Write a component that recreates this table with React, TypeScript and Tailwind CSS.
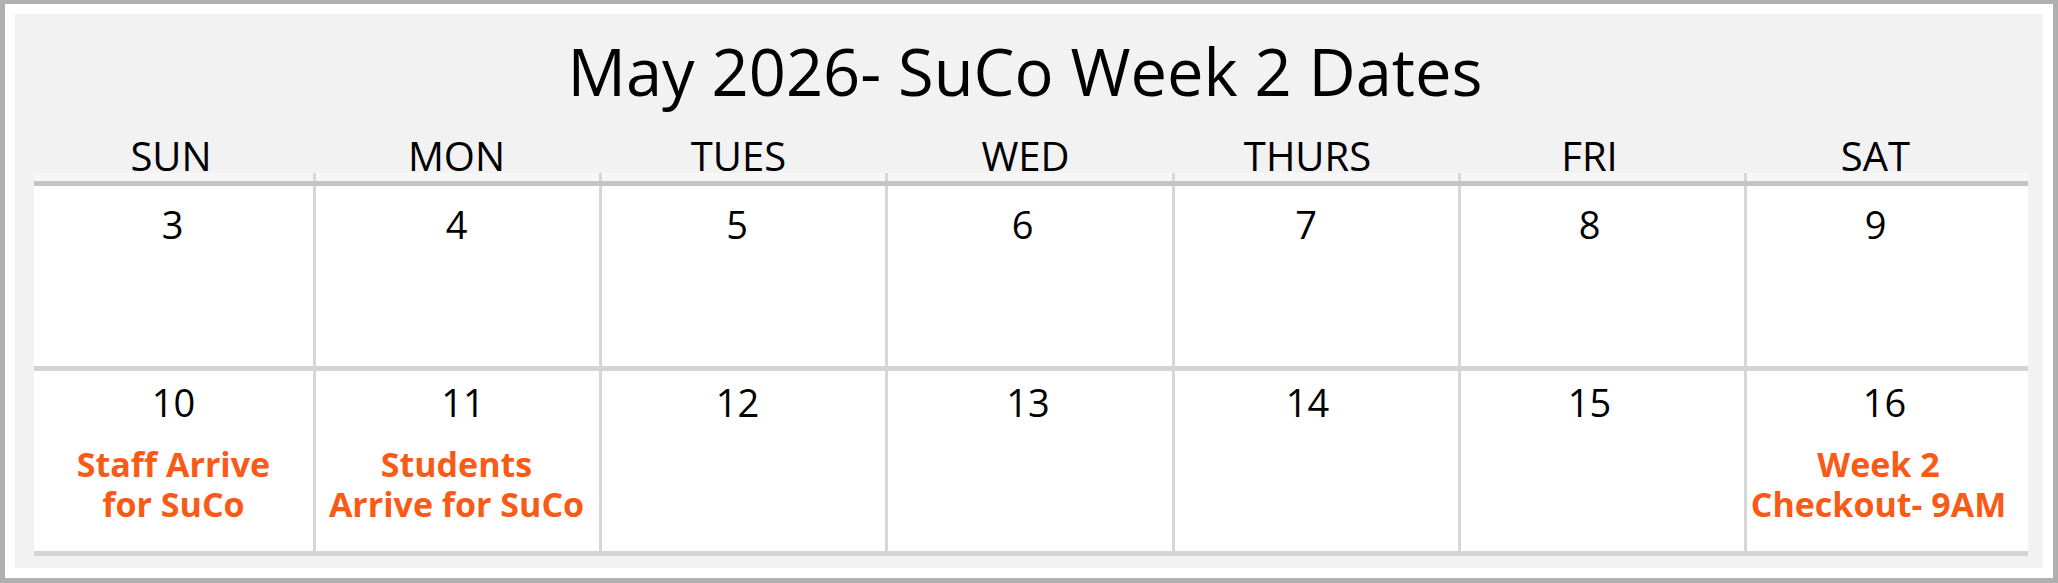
import React from 'react';

// header labels, each nudged a little so they sit where the original puts them
const days = [
  { label: 'SUN', cls: 'pr-[5px]' },
  { label: 'MON', cls: 'pr-[2px]' },
  { label: 'TUES', cls: 'pr-[10px]' },
  { label: 'WED', cls: 'pr-[9px]' },
  { label: 'THURS', cls: 'pr-[18px]' },
  { label: 'FRI', cls: 'pr-[26px]' },
  { label: 'SAT', cls: 'pr-[24px]' },
];

type Cell = { date: string; cls: string; note?: string[]; noteCls?: string };

const weeks: Cell[][] = [
  [
    { date: '3', cls: 'pr-[2px]' },
    { date: '4', cls: 'pr-[2px]' },
    { date: '5', cls: 'pr-[13px]' },
    { date: '6', cls: 'pr-[15px]' },
    { date: '7', cls: 'pr-[21px]' },
    { date: '8', cls: 'pr-[26px]' },
    { date: '9', cls: 'pr-[24px]' },
  ],
  [
    { date: '10', cls: '', note: ['Staff Arrive', 'for SuCo'], noteCls: '' },
    { date: '11', cls: 'pl-[11px]', note: ['Students', 'Arrive for SuCo'], noteCls: 'pr-[2px]' },
    { date: '12', cls: 'pr-[12px]' },
    { date: '13', cls: 'pr-[4px]' },
    { date: '14', cls: 'pr-[18px]' },
    { date: '15', cls: 'pr-[26px]' },
    { date: '16', cls: 'pr-[6px]', note: ['Week 2', 'Checkout- 9AM'], noteCls: 'pr-[18px]' },
  ],
];

const cols = 'grid-cols-[282px_286px_286px_287px_286px_286px_281px]';

export default function App() {
  return (
    <div className="h-[583px] w-[2058px] border-[5px] border-t-[4px] border-[#b0b0b0] bg-white p-[10px] font-['Open_Sans',sans-serif] text-black">
      <div className="flex h-full flex-col bg-[#f2f2f2] pl-[19px] pr-[15px] pt-[24px]">
        <h1 className="pr-[12px] text-center text-[65px] leading-[66px] font-normal">May 2026- SuCo Week 2 Dates</h1>

        <div className={`mt-[35px] grid h-[34px] ${cols} divide-x-[3px] divide-transparent text-center text-[40px] leading-[34px]`}>
          {days.map((d) => (
            <div className={d.cls} key={d.label}>
              {d.label}
            </div>
          ))}
        </div>

        <div className="flex flex-col">
          <div className={`grid h-[8px] ${cols} divide-x-[3px] divide-[#d6d6d6] bg-[#f7f7f7]`}>
            {days.map((d) => (
              <div key={d.label} />
            ))}
          </div>
          <div className="h-[5px] bg-[#c4c4c4]" />
          {weeks.map((week, i) => (
            <div key={i}>
              <div className={`grid h-[180px] ${cols} divide-x-[3px] divide-[#d6d6d6] bg-white`}>
                {week.map((c) => (
                  <div className={i === 0 ? 'pt-[16px] text-center' : 'pt-[9px] text-center'} key={c.date}>
                    <div className={`text-[38px] leading-[44px] ${c.cls}`}>{c.date}</div>
                    {c.note && (
                      <div className={`mt-[20px] text-[34px] leading-[40px] font-bold text-[#f95a16] ${c.noteCls}`}>
                        {c.note.map((line) => (
                          <div className="h-[40px]" key={line}>
                            {line}
                          </div>
                        ))}
                      </div>
                    )}
                  </div>
                ))}
              </div>
              <div className="h-[5px] bg-[#d4d4d4]" />
            </div>
          ))}
        </div>
      </div>
    </div>
  );
}
